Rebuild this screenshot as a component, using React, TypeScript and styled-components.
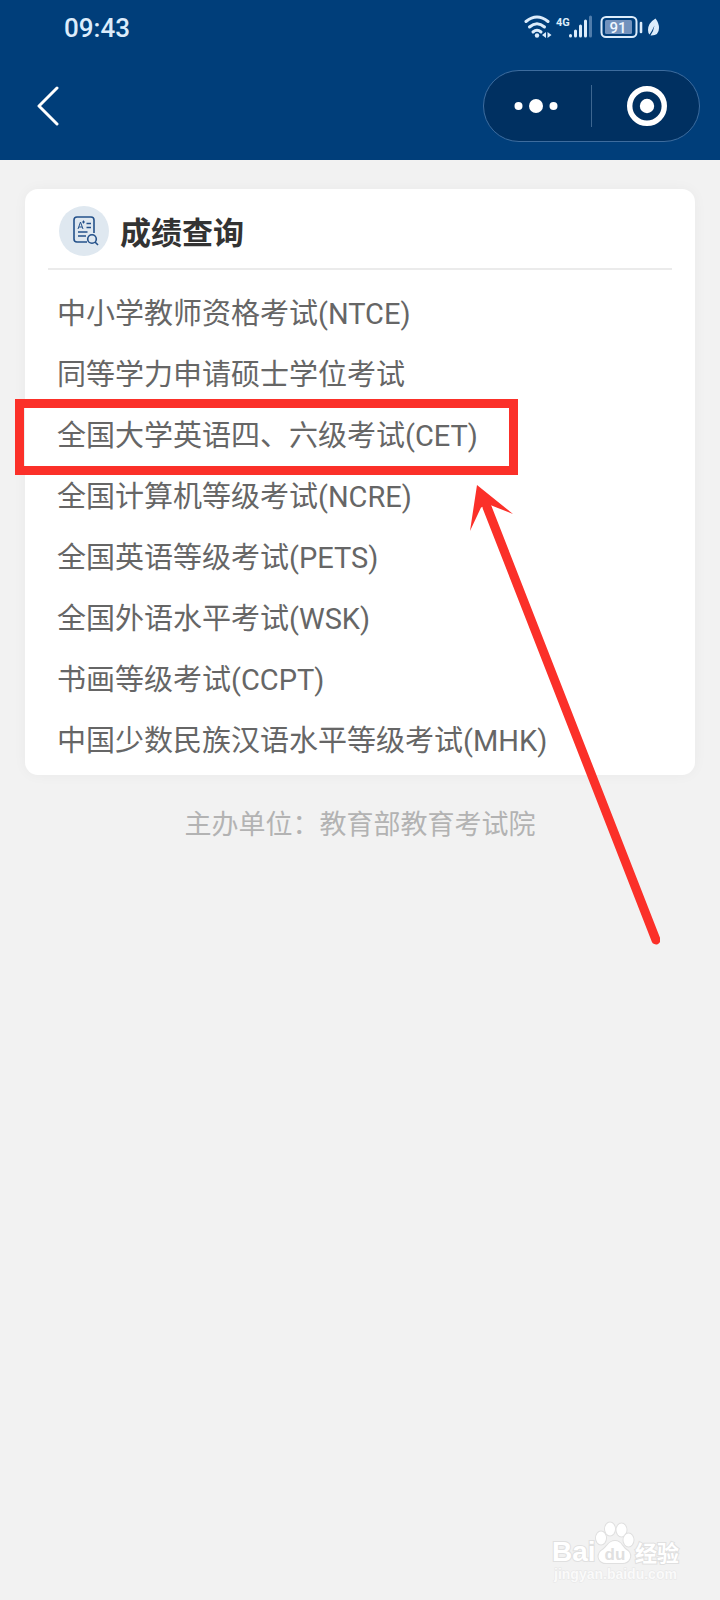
import React from "react";
import styled, { createGlobalStyle } from "styled-components";

const GlobalStyle = createGlobalStyle`
  * { box-sizing: border-box; }
  body {
    margin: 0;
    background: #f2f2f2;
    font-family: "Noto Sans CJK SC", sans-serif;
  }
`;

const Page = styled.div`
  display: flex;
  flex-direction: column;
  min-height: 100vh;
  overflow-x: hidden;
`;

const Header = styled.header`
  background: #003e7a;
  color: #fff;
  height: 160px;
`;

const StatusBar = styled.div`
  display: flex;
  align-items: center;
  justify-content: space-between;
  height: 54px;
  padding: 0 60px 0 64px;
  color: #dcecfb;
`;

const Clock = styled.time`
  padding-top: 2px;
  font: 500 26px/32px Roboto, sans-serif;
`;

const NavBar = styled.nav`
  display: flex;
  align-items: center;
  justify-content: space-between;
  height: 104px;
  padding: 0 20px 0 28px;
`;

const IconButton = styled.button`
  display: flex;
  align-items: center;
  justify-content: center;
  width: 40px;
  height: 56px;
  padding: 0;
  border: 0;
  background: none;
  color: inherit;
`;

const Capsule = styled.div`
  display: flex;
  align-items: center;
  width: 217px;
  height: 72px;
  border: 1px solid #3d6c9e;
  border-radius: 36px;
  background: #003061;
`;

const CapsuleButton = styled(IconButton)<{ $side: "left" | "right" }>`
  flex: 1;
  padding: ${({ $side }) => ($side === "left" ? "0 3px 0 0" : "0 0 0 3px")};
`;

const CapsuleDivider = styled.span`
  width: 1px;
  height: 42px;
  background: #3d6690;
`;

const Card = styled.main`
  margin: 29px 25px 0;
  padding: 0 23px 3px;
  border-radius: 13px;
  background: #fff;
  box-shadow: 0 0 14px rgba(0, 0, 0, 0.04);
`;

const CardHeader = styled.div`
  display: flex;
  align-items: center;
  gap: 11px;
  height: 81px;
  padding: 4px 11px 0;
  border-bottom: 2px solid #ebebeb;
`;

const Badge = styled.span`
  display: flex;
  align-items: center;
  justify-content: center;
  width: 50px;
  height: 50px;
  border-radius: 50%;
  background: #dfe8f0;
`;

const Title = styled.h1`
  margin: 0;
  color: #333;
  font-size: 31px;
  font-weight: 700;
  line-height: 46px;
`;

const ExamList = styled.ul`
  margin: 0;
  padding: 14px 9px 0;
  list-style: none;
`;

const ExamItem = styled.li`
  position: relative;
  height: 61px;
`;

const ExamLink = styled.a`
  display: block;
  color: #666;
  font-family: Roboto, "Noto Sans CJK SC", sans-serif;
  font-size: 29px;
  line-height: 61px;
  text-decoration: none;
  white-space: nowrap;
`;

const Highlight = styled.span`
  position: absolute;
  top: -7px;
  left: -42px;
  width: 503px;
  height: 76px;
  border: 9px solid #fb3029;
  pointer-events: none;
`;

const Arrow = styled.svg`
  position: absolute;
  top: 75px;
  left: 403px;
  pointer-events: none;
`;

const Organizer = styled.p`
  margin: 28px 0 0;
  color: #b3b3b3;
  font-size: 27px;
  line-height: 40px;
  text-align: center;
`;

const Watermark = styled.footer`
  display: flex;
  justify-content: flex-end;
  margin-top: auto;
  padding: 0 36px 15px;
`;

function StatusIcons() {
  return (
    <svg width="138" height="32" viewBox="522 10 138 32" fill="none" role="img" aria-label="Wi-Fi, 4G, 91%">
      <g stroke="#dcecfb" strokeWidth="3" strokeLinecap="round">
        <path d="M526 20.500Q537 11.500 548 20.500" />
        <path d="M529.500 26Q537 19.500 544.500 26" />
        <path d="M533 31Q537 27.500 541 31" />
      </g>
      <circle cx="537" cy="34.500" r="2.200" fill="#dcecfb" />
      <path d="M546 31v6l-4-3zM547.500 31v6l4-3z" fill="#dcecfb" />
      <text x="556" y="24.500" fill="#dcecfb" fontFamily="Roboto, sans-serif" fontSize="11" fontWeight="700">4G</text>
      <g strokeWidth="3" strokeLinecap="round">
        <path d="M570.500 34.500v.5M575.500 30v5M580.500 25v10M585.500 20v15" stroke="#dcecfb" />
        <path d="M590.500 16v19" stroke="#4f7cab" />
      </g>
      <rect x="601.500" y="16" width="35" height="20" rx="4.500" stroke="#dcecfb" strokeWidth="2" />
      <rect x="605" y="19" width="27" height="14" rx="1.500" fill="#7292bd" />
      <text x="618" y="31.500" fill="#f0f7ff" fontFamily="Roboto, sans-serif" fontSize="15" fontWeight="500" textAnchor="middle">91</text>
      <path d="M641 22v9" stroke="#dcecfb" strokeWidth="2.600" strokeLinecap="round" />
      <path d="M655.500 17.500Q648 22 648 29Q648 32 649.500 33.500Q652 30 654.500 24.500Q653.500 30.500 650.500 34.500Q659 35 659 27Q659 22 655.500 17.500Z" fill="#dcecfb" />
    </svg>
  );
}

function ReportIcon() {
  return (
    <svg width="30" height="31" viewBox="-4 -1 30 31" fill="none" stroke="#24518a" strokeWidth="1.600" aria-hidden="true">
      <path d="M14 26H4Q1 26 1 23V4Q1 1 4 1H18Q21 1 21 4V17" />
      <path d="M13.500 7.500h4.500M13.500 11.500h4.500M5 16h9.500M5 20h8" />
      <path d="M5 13 7.500 6 10 13M6 11h3M10.500 4.500v3M9 6h3" strokeWidth="1" />
      <circle cx="19" cy="23" r="4.300" />
      <path d="m22 26 3 3" />
    </svg>
  );
}

function AnnotationArrow() {
  return (
    <Arrow width="200" height="468" viewBox="460 481 200 468" aria-hidden="true">
      <path d="M487 507 656 940" stroke="#fb3029" strokeWidth="9" strokeLinecap="round" />
      <path d="M477 485 513 514 489 504.500 481 507.500 470 531Z" fill="#fb3029" />
    </Arrow>
  );
}

function BaiduLogo() {
  const outline = { fill: "#fff", stroke: "#e0e0e0", strokeWidth: 2, paintOrder: "stroke" } as const;
  return (
    <svg width="132" height="66" viewBox="552 1519 132 66" role="img" aria-label="Baidu 经验">
      <g {...outline}>
        <text x="552" y="1561" fontFamily="'Liberation Sans', sans-serif" fontSize="28" fontWeight="700">Bai</text>
        <ellipse cx="601" cy="1538" rx="5" ry="6.500" />
        <ellipse cx="610" cy="1529" rx="5" ry="6.500" />
        <ellipse cx="621.500" cy="1530" rx="5" ry="6.500" />
        <ellipse cx="628.500" cy="1540" rx="5" ry="6.500" />
        <path d="M615 1541C622 1541 622 1548 628 1551C633 1556 629 1564 621 1563H608C599 1564 596 1556 601 1551C608 1547 608 1541 615 1541Z" />
        <text x="635" y="1561" fontFamily="'Noto Sans CJK SC', sans-serif" fontSize="22" fontWeight="700">经验</text>
      </g>
      <text x="615" y="1560" textAnchor="middle" fill="#e0e0e0" fontFamily="'Liberation Sans', sans-serif" fontSize="17" fontWeight="700">du</text>
      <text x="554" y="1579" fill="#fafafa" stroke="#e6e6e6" strokeWidth="1" paintOrder="stroke" fontFamily="'Liberation Sans', sans-serif" fontSize="14" fontWeight="700">jingyan.baidu.com</text>
    </svg>
  );
}

const exams = [
  { name: "中小学教师资格考试(NTCE)" },
  { name: "同等学力申请硕士学位考试" },
  { name: "全国大学英语四、六级考试(CET)", highlighted: true },
  { name: "全国计算机等级考试(NCRE)" },
  { name: "全国英语等级考试(PETS)" },
  { name: "全国外语水平考试(WSK)" },
  { name: "书画等级考试(CCPT)" },
  { name: "中国少数民族汉语水平等级考试(MHK)" },
];

export default function App() {
  return (
    <Page>
      <GlobalStyle />
      <Header>
        <StatusBar>
          <Clock>09:43</Clock>
          <StatusIcons />
        </StatusBar>
        <NavBar>
          <IconButton aria-label="返回">
            <svg width="24" height="40" viewBox="0 0 24 40" fill="none" stroke="#fff" strokeWidth="3" strokeLinecap="round" strokeLinejoin="round">
              <path d="M21 2 3 20 21 38" />
            </svg>
          </IconButton>
          <Capsule>
            <CapsuleButton $side="left" aria-label="更多">
              <svg width="44" height="16" viewBox="0 0 44 16" fill="#fff">
                <circle cx="4.500" cy="8" r="4" />
                <circle cx="22" cy="8" r="7" />
                <circle cx="39.500" cy="8" r="4" />
              </svg>
            </CapsuleButton>
            <CapsuleDivider />
            <CapsuleButton $side="right" aria-label="关闭">
              <svg width="42" height="42" viewBox="0 0 42 42" fill="none">
                <circle cx="21" cy="21" r="17.300" stroke="#fff" strokeWidth="5.400" />
                <circle cx="21" cy="21" r="7.200" fill="#fff" />
              </svg>
            </CapsuleButton>
          </Capsule>
        </NavBar>
      </Header>
      <Card>
        <CardHeader>
          <Badge>
            <ReportIcon />
          </Badge>
          <Title>成绩查询</Title>
        </CardHeader>
        <ExamList>
          {exams.map((exam) => (
            <ExamItem key={exam.name}>
              <ExamLink href="#">{exam.name}</ExamLink>
              {exam.highlighted && (
                <>
                  <Highlight />
                  <AnnotationArrow />
                </>
              )}
            </ExamItem>
          ))}
        </ExamList>
      </Card>
      <Organizer>主办单位：教育部教育考试院</Organizer>
      <Watermark>
        <BaiduLogo />
      </Watermark>
    </Page>
  );
}
